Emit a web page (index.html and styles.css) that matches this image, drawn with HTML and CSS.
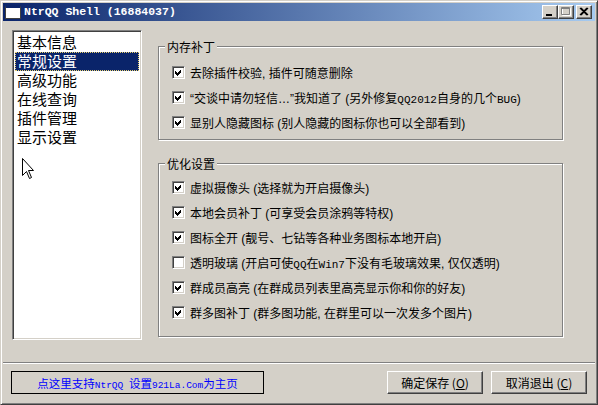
FILE: index.html
```html
<!DOCTYPE html>
<html>
<head>
<meta charset="utf-8">
<link rel="stylesheet" href="styles.css">
</head>
<body>
<div class="window">
  <div class="titlebar">
    <span class="app-icon"></span>
    <span class="title">NtrQQ Shell (16884037)</span>
    <div class="controls">
      <span class="tbtn"><svg width="14" height="12" viewBox="0 0 14 12"><rect x="3" y="8" width="6" height="2" fill="#000"/></svg></span>
      <span class="tbtn"><svg width="14" height="12" viewBox="0 0 14 12"><path d="M3.5 2.5h8v7h-8z" fill="none" stroke="#fff"/><path d="M2.5 1.5h8v7h-8z M2.5 2.5h8" fill="none" stroke="#808080"/></svg></span>
      <span class="tbtn close"><svg width="14" height="12" viewBox="0 0 14 12"><path d="M3 2 L10 9 M10 2 L3 9 M4 2 L11 9 M11 2 L4 9" stroke="#000" stroke-width="1.2"/></svg></span>
    </div>
  </div>
  <div class="client">
    <div class="main">
      <div class="listbox">
        <div class="item">基本信息</div>
        <div class="item selected">常规设置</div>
        <div class="item">高级功能</div>
        <div class="item">在线查询</div>
        <div class="item">插件管理</div>
        <div class="item">显示设置</div>
        <svg class="cursor" width="12" height="22" viewBox="0 0 12 22"><path d="M0.5 0.5 V17.5 L4.5 13.5 L7.5 20.5 L9.5 19.5 L6.5 12.5 L11.5 12.5 Z" fill="#fff" stroke="#000"/></svg>
      </div>
      <div class="groups">
        <div class="group g1">
          <div class="group-title">内存补丁</div>
          <div class="rows">
            <div class="row"><span class="cb on"></span><span>去除插件校验, 插件可随意删除</span></div>
            <div class="row"><span class="cb on"></span><span>“交谈中请勿轻信…”我知道了 (另外修复<span class="lat">QQ2012</span>自身的几个<span class="lat">BUG</span>)</span></div>
            <div class="row"><span class="cb on"></span><span>显别人隐藏图标 (别人隐藏的图标你也可以全部看到)</span></div>
          </div>
        </div>
        <div class="group g2">
          <div class="group-title">优化设置</div>
          <div class="rows">
            <div class="row"><span class="cb on"></span><span>虚拟摄像头 (选择就为开启摄像头)</span></div>
            <div class="row"><span class="cb on"></span><span>本地会员补丁 (可享受会员涂鸦等特权)</span></div>
            <div class="row"><span class="cb on"></span><span>图标全开 (靓号、七钻等各种业务图标本地开启)</span></div>
            <div class="row"><span class="cb"></span><span>透明玻璃 (开启可使<span class="lat">QQ</span>在<span class="lat">Win7</span>下没有毛玻璃效果, 仅仅透明)</span></div>
            <div class="row"><span class="cb on"></span><span>群成员高亮 (在群成员列表里高亮显示你和你的好友)</span></div>
            <div class="row"><span class="cb on"></span><span>群多图补丁 (群多图功能, 在群里可以一次发多个图片)</span></div>
          </div>
        </div>
      </div>
    </div>
    <div class="sep"></div>
    <div class="footer">
      <div class="link"><span>点这里支持<span class="lat">NtrQQ </span>设置<span class="lat">921La.Com</span>为主页</span></div>
      <div class="buttons">
        <div class="btn">确定保存 (<u>O</u>)</div>
        <div class="btn">取消退出 (<u>C</u>)</div>
      </div>
    </div>
  </div>
</div>
</body>
</html>
```
FILE: styles.css
```css
html, body {
  margin: 0;
  padding: 0;
  background: #d4d0c8;
}
body {
  font-family: "Liberation Sans", "Noto Sans CJK SC", sans-serif;
  font-size: 12px;
  color: #000;
}
.window {
  width: 598px;
  height: 405px;
  box-sizing: border-box;
  border: 1px solid;
  border-color: #d4d0c8 #404040 #404040 #d4d0c8;
  box-shadow: inset 1px 1px 0 #fff, inset -1px -1px 0 #808080;
  padding: 2px;
  background: #d4d0c8;
  display: flex;
  flex-direction: column;
}
.titlebar {
  height: 18px;
  display: flex;
  align-items: center;
  background: linear-gradient(90deg, #0a246a 0%, #a6caf0 100%);
  padding: 0 2px 0 2px;
}
.app-icon {
  width: 16px;
  height: 14px;
  box-sizing: border-box;
  background: #fff;
  border: 1px solid #404040;
  border-top: 3px solid #0a246a;
}
.title {
  margin-left: 3px;
  color: #fff;
  font-family: "Liberation Mono", monospace;
  font-weight: bold;
  font-size: 11.5px;
  line-height: 14px;
}
.controls {
  margin-left: auto;
  display: flex;
  padding-right: 1px;
}
.tbtn {
  width: 16px;
  height: 14px;
  box-sizing: border-box;
  background: #d4d0c8;
  border: 1px solid;
  border-color: #fff #404040 #404040 #fff;
  box-shadow: inset -1px -1px 0 #808080;
  display: flex;
  align-items: center;
  justify-content: center;
}
.tbtn svg { display: block; }
.tbtn.close { margin-left: 2px; }
.client {
  flex: 1;
  display: flex;
  flex-direction: column;
}
.main {
  display: flex;
  padding: 9px 0 0 9px;
}
.listbox {
  position: relative;
  width: 130px;
  height: 310px;
  box-sizing: border-box;
  background: #fff;
  border: 1px solid;
  border-color: #808080 #fff #fff #808080;
  box-shadow: inset 1px 1px 0 #404040, inset -1px -1px 0 #d4d0c8;
  padding: 2px 2px 0 2px;
  font-family: "Noto Sans CJK SC", sans-serif;
  font-size: 15px;
}
.item {
  height: 19px;
  line-height: 18px;
  padding-left: 2px;
  box-sizing: border-box;
}
.item.selected {
  background: #0a246a;
  color: #fff;
  outline: 1px dotted #e8d070;
  outline-offset: -1px;
}
.cursor {
  position: absolute;
  left: 9px;
  top: 127px;
}
.groups {
  margin-left: 16px;
  width: 405px;
  padding-top: 16px;
}
.group {
  border: 1px solid #808080;
  box-shadow: inset 1px 1px 0 #fff, 1px 1px 0 #fff;
  box-sizing: border-box;
}
.group-title {
  width: fit-content;
  margin: -7px 0 0 6px;
  padding: 0 2px;
  background: #d4d0c8;
  line-height: 13px;
  height: 13px;
  font-family: "Noto Sans CJK SC", sans-serif;
}
.g1 .rows { padding: 7px 0 4px 13px; }
.g2 { margin-top: 23px; }
.g2 .rows { padding: 5px 0 11px 13px; }
.row {
  height: 25px;
  display: flex;
  align-items: center;
  white-space: nowrap;
}
.lat {
  font-family: "Liberation Mono", monospace;
  font-size: 11px;
}
.cb {
  width: 13px;
  height: 13px;
  box-sizing: border-box;
  flex: none;
  background: #fff;
  border: 1px solid;
  border-color: #808080 #fff #fff #808080;
  box-shadow: inset 1px 1px 0 #404040, inset -1px -1px 0 #d4d0c8;
  margin-right: 5px;
}
.cb.on {
  background: #fff url("data:image/svg+xml;utf8,<svg xmlns='http://www.w3.org/2000/svg' width='11' height='11' viewBox='0 0 11 11'><path d='M2 4 L4 6 L8 2 L8 5 L4 9 L2 7 Z' fill='black' shape-rendering='crispEdges'/></svg>") no-repeat 0 0;
}
.sep {
  margin-top: 22px;
  height: 0;
  border-top: 1px solid #808080;
  border-bottom: 1px solid #fff;
}
.footer {
  display: flex;
  justify-content: space-between;
  padding: 7px 8px 0 8px;
}
.link {
  width: 253px;
  height: 23px;
  box-sizing: border-box;
  border: 1px solid #000;
  display: flex;
  align-items: center;
  justify-content: center;
  color: #0000ff;
  font-family: "Noto Sans CJK SC", sans-serif;
  font-size: 11.5px;
  white-space: pre;
}
.link .lat {
  font-size: 9.5px;
}
.buttons {
  display: flex;
  gap: 8px;
}
.btn {
  width: 96px;
  height: 23px;
  box-sizing: border-box;
  border: 1px solid;
  border-color: #fff #404040 #404040 #fff;
  box-shadow: inset -1px -1px 0 #808080, inset 1px 1px 0 #d4d0c8;
  display: flex;
  align-items: center;
  justify-content: center;
  font-family: "Noto Sans CJK SC", sans-serif;
  font-size: 12px;
}
```
